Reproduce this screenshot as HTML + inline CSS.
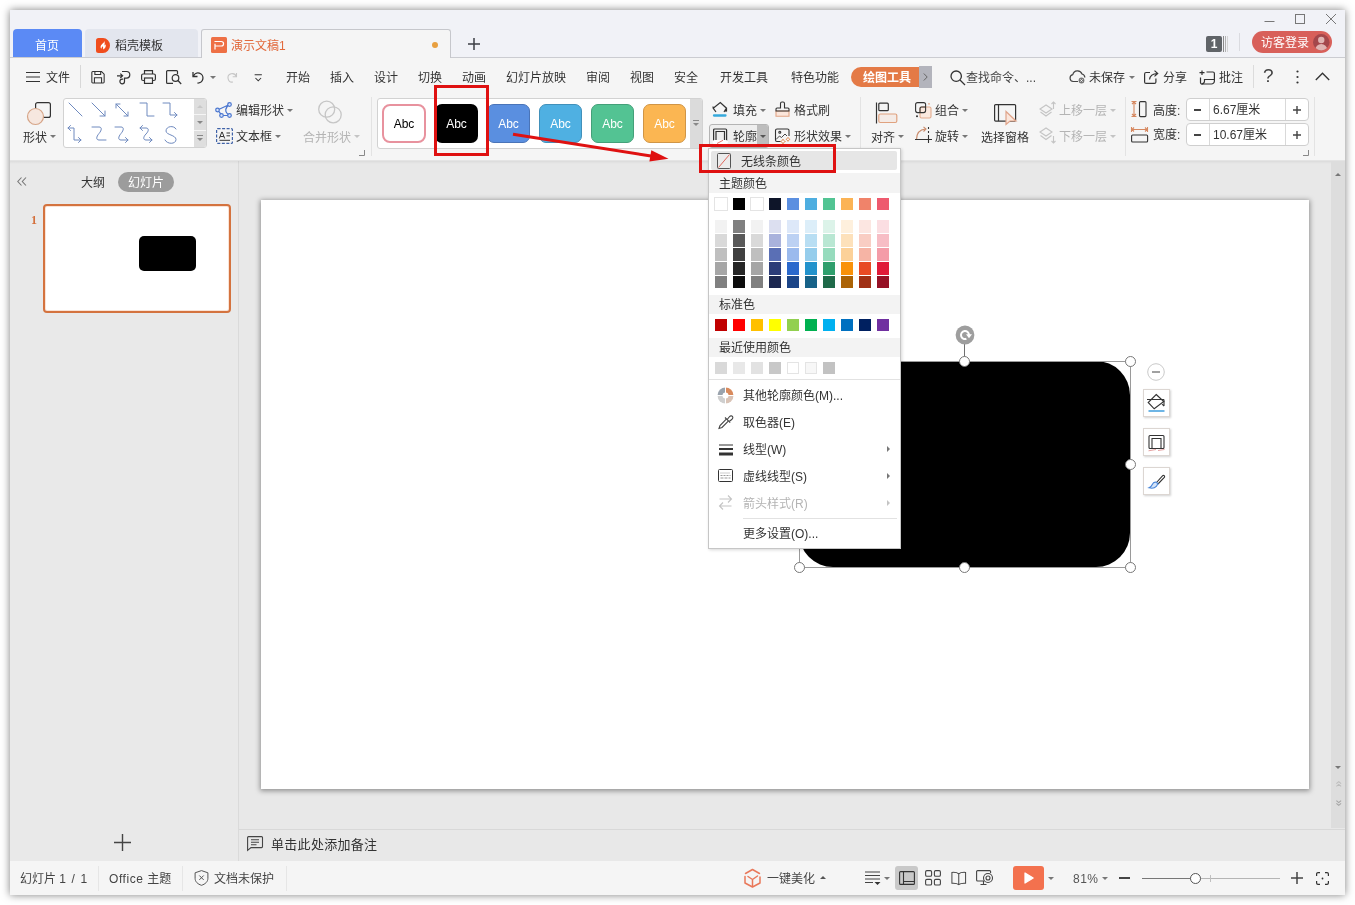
<!DOCTYPE html>
<html lang="zh-CN">
<head>
<meta charset="utf-8">
<title>演示文稿1 - WPS 演示</title>
<style>
*{box-sizing:border-box;margin:0;padding:0}
html,body{width:1355px;height:905px;overflow:hidden;background:#fff}
body{font-family:"Liberation Sans","Noto Sans CJK SC",sans-serif;font-size:12px;color:#333;position:relative}
.abs,.t,#win div,#win span,#win svg{position:absolute}
#win{position:absolute;left:10px;top:10px;width:1335px;height:885px;background:#f5f5f5;box-shadow:0 0 8px 0 rgba(0,0,0,.5)}
/* all children are positioned in page coordinates via #pg offset */
#pg{position:absolute;left:-10px;top:-10px;width:1355px;height:905px;will-change:transform}
.t{white-space:nowrap;line-height:16px;height:16px;font-size:12px;color:#333;margin-top:1px}
.g{color:#b4b4b4}
.sep{width:1px;background:#dcdcdc}
.dd{width:0;height:0;border-left:3px solid transparent;border-right:3px solid transparent;border-top:3px solid #777}
.ddg{border-top-color:#c4c4c4}
svg{overflow:visible}
.sw{width:12px;height:12px}
</style>
</head>
<body>
<div id="win"><div id="pg">

<!-- ===== TITLE / TAB BAR ===== -->
<div id="titlebar" style="left:10px;top:10px;width:1335px;height:47px;background:#f1f2f7"></div>
<div style="left:10px;top:57px;width:1335px;height:1px;background:#cbccd1"></div>
<!--TABS-->
<!-- home tab -->
<div style="left:13px;top:29px;width:69px;height:28px;background:#5b8af5;border-radius:4px 4px 0 0"></div>
<div class="t" style="left:35px;top:37px;color:#fff;font-size:12px">首页</div>
<!-- template tab -->
<div style="left:85px;top:29px;width:113px;height:28px;background:#e3e6ee;border-radius:4px 4px 0 0"></div>
<svg style="left:96px;top:38px" width="14" height="15" viewBox="0 0 14 15"><path d="M2.500 0H7a7 7.500 0 0 1 0 15H2.500A2.500 2.500 0 0 1 0 12.500v-10A2.500 2.500 0 0 1 2.500 0z" fill="#f04d1d"/><path d="M8.200 2.800c.300 1.700-1.300 2.500-2.500 3.700-1.300 1.300-1.500 3-.400 4.500.100-1.300.700-2 1.700-2.700-.100 1.200.300 2 .100 3.200 2.300-.900 3.300-3.200 2.400-5.200-.300.700-.600 1-1.100 1.300.400-1.600.500-3.200-.200-4.800z" fill="#fff"/></svg>
<div class="t" style="left:115px;top:37px;color:#333">稻壳模板</div>
<!-- active doc tab -->
<div style="left:201px;top:29px;width:250px;height:29px;background:#f5f5f5;border:1px solid #c6c7cc;border-bottom:none;border-radius:3px 3px 0 0"></div>
<svg style="left:211px;top:37px" width="16" height="16" viewBox="0 0 16 16"><rect width="16" height="16" rx="1.500" fill="#ee7045"/><path d="M3.500 4.500h6.800a2.250 2.250 0 0 1 0 4.500H4M4 6.700v5.800" fill="none" stroke="#fff" stroke-width="1.200"/></svg>
<div class="t" style="left:231px;top:37px;color:#e2693b">演示文稿1</div>
<div style="left:432px;top:42px;width:6px;height:6px;border-radius:3px;background:#e8a040"></div>
<!-- plus -->
<svg style="left:468px;top:38px" width="12" height="12" viewBox="0 0 12 12"><path d="M6 0v12M0 6h12" stroke="#3c3f45" stroke-width="1.500"/></svg>
<!-- window controls -->
<svg style="left:1264px;top:13px" width="74" height="14" viewBox="0 0 74 14"><path d="M0.500 8.500h10" stroke="#777" stroke-width="1"/><rect x="31.500" y="1.500" width="9" height="9" fill="none" stroke="#777" stroke-width="1"/><path d="M62 1l10 10M72 1l-10 10" stroke="#777" stroke-width="1"/></svg>
<!-- badge 1 -->
<div style="left:1206px;top:36px;width:16px;height:16px;background:#606468;border-radius:2px"></div>
<div class="t" style="left:1206px;top:35px;width:16px;text-align:center;color:#fff;font-weight:bold;font-size:12px;line-height:16px;height:16px">1</div>
<div style="left:1223px;top:36px;width:1px;height:16px;background:#8a8a8a"></div>
<div style="left:1225px;top:36px;width:1px;height:16px;background:#b0b0b0"></div>
<div style="left:1227px;top:36px;width:1px;height:16px;background:#d4d4d4"></div>
<div class="sep" style="left:1239px;top:33px;height:18px;background:#dadbe0"></div>
<!-- login -->
<div style="left:1252px;top:31px;width:80px;height:22px;border-radius:11px;background:#d8605a"></div>
<div class="t" style="left:1261px;top:34px;color:#fff">访客登录</div>
<svg style="left:1313px;top:34px" width="16.500" height="16.500" viewBox="0 0 18 18"><circle cx="9" cy="9" r="9" fill="#a4474b"/><clipPath id="avc"><circle cx="9" cy="9" r="9"/></clipPath><g clip-path="url(#avc)"><circle cx="9" cy="6.500" r="3.500" fill="#e0b4b2"/><ellipse cx="9" cy="17" rx="6.500" ry="6" fill="#e0b4b2"/></g></svg>
<!--/TABS-->

<!-- ===== MENU ROW ===== -->
<!--MENU-->
<!-- hamburger + file -->
<svg style="left:26px;top:71px" width="14" height="12" viewBox="0 0 14 12"><path d="M0 1.500h14M0 6h14M0 10.500h14" stroke="#333" stroke-width="1.100"/></svg>
<div class="t" style="left:46px;top:69px">文件</div>
<div class="sep" style="left:80px;top:65px;height:23px;background:#d8d8d8"></div>
<!-- save -->
<svg style="left:91px;top:71px" width="14" height="12.500" viewBox="0 0 15 14" fill="none" stroke="#333" stroke-width="1.200"><path d="M1.600 .600h9.800l3 3v8.800a1 1 0 0 1-1 1H1.600a1 1 0 0 1-1-1V1.600a1 1 0 0 1 1-1z"/><path d="M3.500 13.400V7.500h8v5.900M4 .600v3.400h6.500V.600"/></svg>
<!-- export/pdf -->
<svg style="left:116px;top:70px" width="15" height="15" viewBox="0 0 15 15" fill="none" stroke="#333" stroke-width="1.200"><path d="M6 1.500h4.500a3.300 3.300 0 0 1 0 6.600H8.500v3.400a2.300 2.300 0 1 1-2.300-2.300h1"/><path d="M1 5.800h5.500M4.300 3.600l2.300 2.200-2.300 2.200"/></svg>
<!-- print -->
<svg style="left:141px;top:70px" width="15" height="14" viewBox="0 0 15 14" fill="none" stroke="#333" stroke-width="1.200"><path d="M3.500 4V.600h8V4"/><rect x=".600" y="4" width="13.800" height="6.500" rx="1.500"/><rect x="3.500" y="8" width="8" height="5.400" fill="#f5f5f5"/></svg>
<!-- preview -->
<svg style="left:166px;top:70px" width="16" height="15" viewBox="0 0 16 15" fill="none" stroke="#333" stroke-width="1.200"><path d="M11.500 4V1.600a1 1 0 0 0-1-1H1.600a1 1 0 0 0-1 1v10.800a1 1 0 0 0 1 1H7"/><circle cx="9.500" cy="8" r="3.300"/><path d="M12 10.500l3.200 3.500"/></svg>
<!-- undo -->
<svg style="left:192px;top:71px" width="13" height="13" viewBox="0 0 13 13" fill="none" stroke="#333" stroke-width="1.300"><path d="M1 1v4.500h4.500"/><path d="M1.300 5.200A5 5 0 1 1 5.500 12"/></svg>
<div class="dd" style="left:210px;top:76px"></div>
<!-- redo (disabled) -->
<svg style="left:226px;top:72px" width="12" height="11" viewBox="0 0 11 11" fill="none" stroke="#c6c6c6" stroke-width="1.100"><path d="M10 1v3.800H6.200"/><path d="M9.700 4.500A4.200 4.200 0 1 0 6.500 10"/></svg>
<!-- more -->
<svg style="left:253.500px;top:73.500px" width="8.500" height="8" viewBox="0 0 10 10" fill="none" stroke="#333" stroke-width="1.300"><path d="M.500 1h9M1.500 5l3.500 3.500L8.500 5"/></svg>
<!-- menus -->
<div class="t" style="left:286px;top:69px">开始</div>
<div class="t" style="left:330px;top:69px">插入</div>
<div class="t" style="left:374px;top:69px">设计</div>
<div class="t" style="left:418px;top:69px">切换</div>
<div class="t" style="left:462px;top:69px">动画</div>
<div class="t" style="left:506px;top:69px">幻灯片放映</div>
<div class="t" style="left:586px;top:69px">审阅</div>
<div class="t" style="left:630px;top:69px">视图</div>
<div class="t" style="left:674px;top:69px">安全</div>
<div class="t" style="left:720px;top:69px">开发工具</div>
<div class="t" style="left:791px;top:69px">特色功能</div>
<div style="left:851px;top:67px;width:68px;height:20px;border-radius:10px 0 0 10px;background:#e47a46"></div>
<div class="t" style="left:863px;top:69px;color:#fff;font-weight:bold">绘图工具</div>
<div style="left:919px;top:66px;width:13px;height:22px;background:#b3b4bc"></div>
<svg style="left:923px;top:73px" width="5" height="8" viewBox="0 0 5 8" fill="none" stroke="#666" stroke-width="1"><path d="M.800 .500l3.400 3.500L.800 7.500"/></svg>
<!-- search -->
<svg style="left:950px;top:70px" width="16" height="16" viewBox="0 0 16 16" fill="none" stroke="#333" stroke-width="1.300"><circle cx="6.200" cy="6.200" r="5.200"/><path d="M10 10l5 5"/></svg>
<div class="t" style="left:966px;top:69px;color:#444">查找命令、...</div>
<!-- cloud unsaved -->
<svg style="left:1069px;top:70px" width="18" height="14" viewBox="0 0 18 14" fill="none" stroke="#444" stroke-width="1.200"><path d="M9 11.500H4.200A3.500 3.500 0 0 1 3.800 4.600 4.800 4.800 0 0 1 13 4a3.600 3.600 0 0 1 2.800 3.500"/><circle cx="12.500" cy="10.500" r="2.900" fill="#777" stroke="none"/><path d="M11.400 9.400l2.200 2.200M13.600 9.400l-2.200 2.200" stroke="#fff" stroke-width=".900"/></svg>
<div class="t" style="left:1089px;top:69px">未保存</div>
<div class="dd" style="left:1129px;top:76px"></div>
<!-- share -->
<svg style="left:1144px;top:70px" width="15" height="14" viewBox="0 0 15 14" fill="none" stroke="#333" stroke-width="1.200"><path d="M6 2.500H2.100a1.500 1.500 0 0 0-1.500 1.500v7.900a1.500 1.500 0 0 0 1.500 1.500h8.300a1.500 1.500 0 0 0 1.500-1.500V8.500"/><path d="M5.500 9.500C6 5.500 8.500 3.600 13.500 3.500M10.500 .600l3.200 2.900-3.200 2.900"/></svg>
<div class="t" style="left:1163px;top:69px">分享</div>
<!-- comment -->
<svg style="left:1199px;top:70px" width="16" height="15" viewBox="0 0 16 15" fill="none" stroke="#333" stroke-width="1.200"><path d="M3 .500V5M.500 2.700H5.500"/><path d="M7.500 2h6.400a1.500 1.500 0 0 1 1.500 1.500v7.500a3 3 0 0 1-3 3H3a1.500 1.500 0 0 1-1.500-1.500V7.500"/><path d="M15.400 9.500H5.500v1.200a3 3 0 0 1-3 3.300"/></svg>
<div class="t" style="left:1219px;top:69px">批注</div>
<div class="sep" style="left:1253px;top:65px;height:23px;background:#dcdcdc"></div>
<div class="t" style="left:1263px;top:64px;font-size:19px;line-height:22px;height:22px;color:#444">?</div>
<svg style="left:1296px;top:70px" width="3" height="14" viewBox="0 0 3 14" fill="#333"><circle cx="1.500" cy="1.500" r="1.100"/><circle cx="1.500" cy="7" r="1.100"/><circle cx="1.500" cy="12.500" r="1.100"/></svg>
<svg style="left:1315px;top:72px" width="15" height="9" viewBox="0 0 15 9" fill="none" stroke="#333" stroke-width="1.300"><path d="M.800 8L7.500 1.200 14.200 8"/></svg>
<!--/MENU-->

<!-- ===== RIBBON ===== -->
<!--RIBBON-->
<!-- shapes button -->
<svg style="left:27px;top:101px" width="25" height="25" viewBox="0 0 25 25" fill="none"><rect x="8.600" y="1.600" width="14.800" height="14.800" rx="2" stroke="#333" stroke-width="1.200" fill="#f5f5f5"/><circle cx="8.500" cy="15.500" r="8" fill="#f6e7df" stroke="#d6a588" stroke-width="1.200"/></svg>
<div class="t" style="left:23px;top:129px">形状</div>
<div class="dd" style="left:50px;top:135px"></div>
<!-- shapes gallery -->
<div style="left:63px;top:98px;width:144px;height:50px;background:#fff;border:1px solid #d2d2d2;border-radius:3px"></div>
<div style="left:194px;top:99px;width:12px;height:48px;background:#dedede;border-radius:0 2px 2px 0"></div>
<div style="left:194px;top:114px;width:12px;height:1px;background:#f5f5f5"></div>
<div style="left:194px;top:130px;width:12px;height:1px;background:#f5f5f5"></div>
<div class="dd ddg" style="left:197px;top:105px;border-top:none;border-bottom:3px solid #c8c8c8"></div>
<div class="dd" style="left:197px;top:121px;border-top-color:#888"></div>
<div style="left:197px;top:135px;width:6px;height:1px;background:#888"></div>
<div class="dd" style="left:197px;top:138px;border-top-color:#888"></div>
<svg style="left:63px;top:98px" width="131" height="50" viewBox="0 0 131 50" fill="none" stroke="#6f8abf" stroke-width="1" stroke-linecap="round" stroke-linejoin="round">
<path d="M6 5l13 13"/>
<path d="M29 5l13 13M42 13v5h-5"/>
<path d="M53 6l12 12M53 10V6h4M65 14v4h-4"/>
<path d="M77 5h7v13h7"/>
<path d="M100 5h7v12h7M111.500 14.500l2.500 2.500-2.500 2.500"/>
<path d="M5 30h6v12h7M7.500 27.500L5 30l2.500 2.500M15.500 39.500l2.500 2.500-2.500 2.500"/>
<path d="M29 29h7c3 0 3 3 0 6.500s-3 6.500 0 6.500h7"/>
<path d="M52 29h6c3 0 3 3 0 6.500s-3 6.500 0 6.500h7M62.500 39.500l2.500 2.500-2.500 2.500"/>
<path d="M77 30h6c3 0 3 3 0 6s-3 6 0 6h6M79.500 27.500l-2.500 2.500 2.500 2.500M86.500 39.500l2.500 2.500-2.500 2.500"/>
<path d="M113 31c-2-4-10-3-10 2 0 4 10 4 10 8.500 0 5-9 5-11 .500"/>
</svg>
<!-- edit shape -->
<svg style="left:215px;top:102px" width="18" height="16" viewBox="0 0 18 16" fill="none" stroke="#4a76cf" stroke-width="1.200"><path d="M2.500 8L14.500 2.500C10 5.500 9 10 14.500 13.500H7z"/><g fill="#dbe6fa"><circle cx="2.500" cy="8" r="1.800"/><circle cx="14.500" cy="2.500" r="1.800"/><circle cx="14.500" cy="13.500" r="1.800"/><circle cx="6.500" cy="13.500" r="1.800"/></g></svg>
<div class="t" style="left:236px;top:102px">编辑形状</div>
<div class="dd" style="left:287px;top:109px"></div>
<!-- text box -->
<svg style="left:216px;top:128px" width="17" height="16" viewBox="0 0 17 16" fill="none"><rect x=".600" y=".600" width="15.800" height="14.800" rx="1" stroke="#3f62a8" stroke-width="1.200" stroke-dasharray="3 1.500"/><path d="M3.300 10.500L5.800 4h.400l2.500 6.500M4.200 8.500h3.600M10.500 5h3.500M10.500 7.800h3.500M3.500 12.300h10.500" stroke="#333" stroke-width="1"/></svg>
<div class="t" style="left:236px;top:128px">文本框</div>
<div class="dd" style="left:275px;top:135px"></div>
<!-- merge shapes (disabled) -->
<svg style="left:317px;top:100px" width="26" height="26" viewBox="0 0 26 26" fill="none" stroke="#c6c6c6" stroke-width="1.300"><circle cx="9.700" cy="9.200" r="8"/><circle cx="16.200" cy="14.800" r="8"/></svg>
<div class="t g" style="left:303px;top:129px">合并形状</div>
<div class="dd ddg" style="left:354px;top:135px"></div>
<svg style="left:359px;top:150px" width="6" height="6" viewBox="0 0 6 6" fill="none" stroke="#888" stroke-width="1"><path d="M5.500 0v5.500H0"/></svg>
<div class="sep" style="left:371px;top:97px;height:59px;background:#e3e3e3"></div>
<!-- style gallery -->
<div style="left:377px;top:98px;width:326px;height:51px;background:#fff;border:1px solid #d2d2d2;border-radius:3px"></div>
<div style="left:690px;top:99px;width:12px;height:49px;background:#dbdbdb;border-radius:0 2px 2px 0"></div>
<div style="left:693px;top:120px;width:6px;height:1px;background:#888"></div>
<div class="dd" style="left:693px;top:123px;border-top-color:#888"></div>
<div style="left:382px;top:104px;width:44px;height:39px;background:#fff;border:2px solid #e8929e;border-radius:8px"></div>
<div style="left:435px;top:104px;width:43px;height:39px;background:#000;border-radius:7px"></div>
<div style="left:487px;top:104px;width:43px;height:39px;background:#5a8fe0;border:1px solid #4a74b8;border-radius:7px"></div>
<div style="left:539px;top:104px;width:43px;height:39px;background:#4fb0e2;border:1px solid #4190ba;border-radius:7px"></div>
<div style="left:591px;top:104px;width:43px;height:39px;background:#53c393;border:1px solid #44a079;border-radius:7px"></div>
<div style="left:643px;top:104px;width:43px;height:39px;background:#fbb652;border:1px solid #d09546;border-radius:7px"></div>
<div class="t" style="left:382px;top:115px;width:44px;text-align:center;color:#000;font-size:12px">Abc</div>
<div class="t" style="left:435px;top:115px;width:43px;text-align:center;color:#fff;font-size:12px">Abc</div>
<div class="t" style="left:487px;top:115px;width:43px;text-align:center;color:#fff;font-size:12px">Abc</div>
<div class="t" style="left:539px;top:115px;width:43px;text-align:center;color:#fff;font-size:12px">Abc</div>
<div class="t" style="left:591px;top:115px;width:43px;text-align:center;color:#fff;font-size:12px">Abc</div>
<div class="t" style="left:643px;top:115px;width:43px;text-align:center;color:#fff;font-size:12px">Abc</div>
<!-- fill -->
<svg style="left:712px;top:101px" width="16" height="17" viewBox="0 0 16 17" fill="none" stroke="#333" stroke-width="1.200"><path d="M4 11L1.200 7.200 1 5.500M1.200 7.200L8.300 1.500l6.200 5.700-2.500 3.800M14.500 7.200v3.300M12.500 9l2 1.500"/><path d="M2 14.500h11.500" stroke="#36a9dc" stroke-width="2.300" stroke-linecap="round"/></svg>
<div class="t" style="left:733px;top:102px">填充</div>
<div class="dd" style="left:760px;top:109px"></div>
<!-- format painter -->
<svg style="left:775px;top:101px" width="15" height="16" viewBox="0 0 15 16" fill="none" stroke="#333" stroke-width="1.100"><path d="M1 15.200V10h13v5.200z" fill="#fbe6db" stroke="#e2a585"/><path d="M1 10V8a1 1 0 0 1 1-1h3.500V2.500a1.500 1.500 0 0 1 1.500-1.500h1a1.500 1.500 0 0 1 1.500 1.500V7H13a1 1 0 0 1 1 1v2z"/></svg>
<div class="t" style="left:794px;top:102px">格式刷</div>
<!-- outline (pressed) -->
<div style="left:709px;top:124px;width:60px;height:24px;background:#efefef;border:1px solid #b4b4b4;border-radius:3px"></div>
<div style="left:757px;top:125px;width:11px;height:22px;background:#bdbdbd;border-radius:0 2px 2px 0"></div>
<svg style="left:712px;top:127px" width="16" height="17" viewBox="0 0 16 17" fill="none" stroke="#333" stroke-width="1.200"><path d="M1.600 14V3a1 1 0 0 1 1-1h11a1 1 0 0 1 1 1v11"/><path d="M4 13.500V4.500h8.500v9"/><rect x=".500" y="13" width="15.500" height="4" rx="2" fill="#fff" stroke="none"/><path d="M5 16.500L11 13.300" stroke="#e0776e" stroke-width="1"/></svg>
<div class="t" style="left:733px;top:128px">轮廓</div>
<div class="dd" style="left:760px;top:135px;border-top-color:#555"></div>
<!-- shape effects -->
<svg style="left:775px;top:127px" width="16" height="17" viewBox="0 0 16 17" fill="none" stroke="#333" stroke-width="1.100"><path d="M6 14.500H2a1.500 1.500 0 0 1-1.500-1.500V3.500A1.500 1.500 0 0 1 2 2h10.500A1.500 1.500 0 0 1 14 3.500V9"/><circle cx="4.800" cy="5.300" r="1"/><path d="M1 12.500l3.500-3.500 2 1.500 3.500-3.500 2 2" stroke-width=".900"/><path d="M8 12l.800 1.700 1.700.800-1.700.800L8 17l-.800-1.700-1.700-.800 1.700-.800zM13 10.200l.700 1.400 1.400.700-1.400.700-.700 1.400-.700-1.400-1.400-.700 1.400-.700z" stroke="#e0935f" stroke-width=".900" fill="#fff"/></svg>
<div class="t" style="left:794px;top:128px">形状效果</div>
<div class="dd" style="left:845px;top:135px"></div>
<div class="sep" style="left:860px;top:97px;height:59px;background:#e3e3e3"></div>
<!-- align -->
<svg style="left:875px;top:102px" width="23" height="24" viewBox="0 0 23 24" fill="none" stroke-width="1.200"><path d="M1.500 .500v21" stroke="#333"/><rect x="3.800" y="1.200" width="9.500" height="7.500" rx="1" stroke="#333"/><rect x="3.800" y="12" width="18" height="8.500" rx="1.500" stroke="#e0a27f" fill="#f4ebe6"/></svg>
<div class="t" style="left:871px;top:129px">对齐</div>
<div class="dd" style="left:898px;top:135px"></div>
<!-- group -->
<svg style="left:915px;top:102px" width="17" height="17" viewBox="0 0 17 17" fill="none" stroke-width="1.100"><rect x="5" y="5" width="11" height="11" rx="1.500" stroke="#e3ab8d" fill="#fbe9df"/><rect x=".600" y=".600" width="10" height="10" rx="2" stroke="#333" fill="none"/><path d="M5 10.600V6.500A1.500 1.500 0 0 1 6.500 5H10.600" stroke="#333"/><circle cx="2" cy="14.300" r="1" fill="#333"/><circle cx="14" cy="1.800" r=".900" fill="#e3ab8d"/></svg>
<div class="t" style="left:935px;top:102px">组合</div>
<div class="dd" style="left:962px;top:109px"></div>
<!-- rotate -->
<svg style="left:915px;top:126px" width="18" height="18" viewBox="0 0 18 18" fill="none" stroke-width="1.100"><path d="M1.500 13.500C1.500 7 5 3.500 10.500 3" stroke="#c98a6a"/><path d="M8.500 .800L11 3 8.500 5.500" stroke="#c98a6a"/><path d="M13.500 1v2.500M13.500 5v2.500M13.500 9v2" stroke="#333" stroke-dasharray="2 1.500"/><path d="M0 13.500h17M13.500 11v6" stroke="#333"/></svg>
<div class="t" style="left:935px;top:128px">旋转</div>
<div class="dd" style="left:962px;top:135px"></div>
<!-- selection pane -->
<svg style="left:994px;top:102px" width="26" height="25" viewBox="0 0 26 25" fill="none" stroke-width="1.200"><rect x=".600" y="2.600" width="21" height="16.500" rx="1" stroke="#333"/><path d="M4.500 2.600v16.500" stroke="#333"/><path d="M12 9.500v13l4-3.500h6z" stroke="#e0a48a" fill="#fbe6db"/></svg>
<div class="t" style="left:981px;top:129px">选择窗格</div>
<!-- bring forward / send back -->
<svg style="left:1039px;top:101px" width="18" height="17" viewBox="0 0 18 17" fill="none" stroke="#c4c4c4" stroke-width="1.100"><path d="M7 4L1 8l6 4 6-4zM1.500 11L7 15l5.500-4"/><path d="M14.500 8V1M12.500 3l2-2 2 2"/></svg>
<div class="t g" style="left:1059px;top:102px">上移一层</div>
<div class="dd ddg" style="left:1110px;top:109px"></div>
<svg style="left:1039px;top:127px" width="18" height="17" viewBox="0 0 18 17" fill="none" stroke="#c4c4c4" stroke-width="1.100"><path d="M7 1L1 5l6 4 6-4zM1.500 8.500L7 12.500l5.500-4"/><path d="M14.500 9v7M12.500 14l2 2 2-2"/></svg>
<div class="t g" style="left:1059px;top:128px">下移一层</div>
<div class="dd ddg" style="left:1110px;top:135px"></div>
<div class="sep" style="left:1125px;top:97px;height:59px;background:#e3e3e3"></div>
<!-- height -->
<svg style="left:1131px;top:101px" width="16" height="17" viewBox="0 0 16 17" fill="none" stroke-width="1.100"><path d="M3 .500v15M.500 .500h5M.500 15.500h5M1 3l2-2 2 2M1 13l2 2 2-2" stroke="#d68860"/><rect x="8.500" y=".600" width="6.500" height="15" rx="1" stroke="#333"/></svg>
<div class="t" style="left:1153px;top:102px">高度:</div>
<div style="left:1186px;top:98px;width:123px;height:23px;background:#fff;border:1px solid #cfcfcf;border-radius:4px"></div>
<div class="sep" style="left:1209px;top:99px;height:21px;background:#d9d9d9"></div>
<div class="sep" style="left:1285px;top:99px;height:21px;background:#d9d9d9"></div>
<div style="left:1194px;top:109px;width:7px;height:1.500px;background:#444"></div>
<div class="t" style="left:1213px;top:101px">6.67厘米</div>
<svg style="left:1293px;top:106px" width="8" height="8" viewBox="0 0 8 8"><path d="M4 0v8M0 4h8" stroke="#444" stroke-width="1.400"/></svg>
<!-- width -->
<svg style="left:1131px;top:126px" width="17" height="17" viewBox="0 0 17 17" fill="none" stroke-width="1.100"><path d="M.500 3.500h16M.500 1v5M16.500 1v5M3 1.500l-2 2 2 2M14 1.500l2 2-2 2" stroke="#d68860"/><rect x=".600" y="9" width="16" height="7" rx="1" stroke="#333"/></svg>
<div class="t" style="left:1153px;top:126px">宽度:</div>
<div style="left:1186px;top:123px;width:123px;height:23px;background:#fff;border:1px solid #cfcfcf;border-radius:4px"></div>
<div class="sep" style="left:1209px;top:124px;height:21px;background:#d9d9d9"></div>
<div class="sep" style="left:1285px;top:124px;height:21px;background:#d9d9d9"></div>
<div style="left:1194px;top:134px;width:7px;height:1.500px;background:#444"></div>
<div class="t" style="left:1213px;top:126px">10.67厘米</div>
<svg style="left:1293px;top:131px" width="8" height="8" viewBox="0 0 8 8"><path d="M4 0v8M0 4h8" stroke="#444" stroke-width="1.400"/></svg>
<svg style="left:1303px;top:150px" width="6" height="6" viewBox="0 0 6 6" fill="none" stroke="#888" stroke-width="1"><path d="M5.500 0v5.500H0"/></svg>
<div class="sep" style="left:1314px;top:97px;height:59px;background:#e3e3e3"></div>
<!--/RIBBON-->


<!-- ===== WORKSPACE ===== -->
<div id="work" style="left:10px;top:161px;width:1335px;height:701px;background:#e8e8e8"></div>
<!--LEFTPANEL-->
<div style="left:10px;top:161px;width:228px;height:701px;background:#e9e9e9"></div>
<div style="left:238px;top:161px;width:1px;height:701px;background:#dadada"></div>
<svg style="left:17px;top:177px" width="10" height="9" viewBox="0 0 10 9" fill="none" stroke="#777" stroke-width="1.100"><path d="M4.500 .500L.800 4.500l3.700 4M9 .500L5.300 4.500l3.700 4"/></svg>
<div class="t" style="left:81px;top:174px">大纲</div>
<div style="left:118px;top:172px;width:56px;height:20px;border-radius:10px;background:#9c9c9c"></div>
<div class="t" style="left:128px;top:174px;color:#fff">幻灯片</div>
<div class="t" style="left:31px;top:211px;font-family:'Liberation Serif',serif;font-weight:bold;color:#d4703c;font-size:12px">1</div>
<div style="left:43px;top:204px;width:188px;height:109px;background:#fff;border:2px solid #d4733f;border-radius:4px;box-shadow:inset 0 0 0 1px #fae3d6"></div>
<div style="left:139px;top:236px;width:57px;height:35px;background:#000;border-radius:5px"></div>
<svg style="left:114px;top:834px" width="17" height="17" viewBox="0 0 17 17"><path d="M8.500 0v17M0 8.500h17" stroke="#444" stroke-width="1.400"/></svg>
<div style="left:10px;top:160px;width:1335px;height:4px;background:linear-gradient(rgba(0,0,0,.075),rgba(0,0,0,0))"></div>
<!--/LEFTPANEL-->
<!--SLIDE-->
<div style="left:261px;top:200px;width:1048px;height:589px;background:#fff;box-shadow:0 1px 5px 1px rgba(0,0,0,.38)"></div>
<!-- black rounded shape -->
<div style="left:799px;top:361px;width:331px;height:206px;background:#000;border-radius:34px"></div>
<div style="left:799px;top:361px;width:332px;height:207px;border:1px solid #9a9a9a"></div>
<!-- rotate handle -->
<div style="left:964px;top:344px;width:1px;height:13px;background:#707070"></div>
<svg style="left:954.500px;top:325px" width="20" height="20" viewBox="0 0 20 20"><circle cx="10" cy="10" r="9.400" fill="#9e9e9e"/><path d="M11.400 13.800A4 4 0 1 1 14 10" fill="none" stroke="#fff" stroke-width="2"/><path d="M11 9.300h6L14 13.200z" fill="#fff"/></svg>
<!-- handles -->
<svg style="left:0;top:0" width="1355" height="905" viewBox="0 0 1355 905" fill="#fff" stroke="#777" stroke-width="1"><circle cx="964.500" cy="361.500" r="5"/><circle cx="1130.500" cy="361.500" r="5"/><circle cx="1130.500" cy="464.500" r="5"/><circle cx="799.500" cy="567.500" r="5"/><circle cx="964.500" cy="567.500" r="5"/><circle cx="1130.500" cy="567.500" r="5"/><circle cx="799.500" cy="464.500" r="5"/></svg>
<!-- floating toolbar -->
<svg style="left:1147px;top:363px" width="18" height="18" viewBox="0 0 18 18"><circle cx="9" cy="9" r="8.300" fill="#fff" stroke="#c9c9c9" stroke-width="1"/><path d="M5 9h8" stroke="#8a8a8a" stroke-width="1.600"/></svg>
<div style="left:1143px;top:389px;width:27px;height:28px;background:#fff;border:1px solid #dcd6d2;box-shadow:1px 1px 2px rgba(0,0,0,.18)"></div>
<div style="left:1143px;top:428px;width:27px;height:28px;background:#fff;border:1px solid #dcd6d2;box-shadow:1px 1px 2px rgba(0,0,0,.18)"></div>
<div style="left:1143px;top:467px;width:27px;height:28px;background:#fff;border:1px solid #dcd6d2;box-shadow:1px 1px 2px rgba(0,0,0,.18)"></div>
<svg style="left:1147px;top:393px" width="19" height="19" viewBox="0 0 19 19" fill="none" stroke="#333" stroke-width="1.100"><path d="M9.200 1.500L16.800 8.500 7.200 15.800 1.200 9.500z"/><path d="M0 6.500h17M17 6.500v6.500M15 11l2 2.200"/><path d="M1.500 18h16" stroke="#4aa3df" stroke-width="1.600"/></svg>
<svg style="left:1147px;top:433px" width="19" height="19" viewBox="0 0 19 19" fill="none" stroke="#333" stroke-width="1.100"><rect x="2" y="2.500" width="15" height="13" rx="1"/><path d="M5 15.500V5.500h9v10"/><path d="M1 17.500h17" stroke="#fff" stroke-width="2.500"/><path d="M1.500 17.800L9 16.500M11 17.500L17.500 16.500" stroke="#d88" stroke-width=".800"/></svg>
<svg style="left:1147px;top:472px" width="19" height="19" viewBox="0 0 19 19" fill="none" stroke-width="1.100"><path d="M9.500 10.500L15.500 3.800a1.200 1.200 0 0 1 1.800 1.600L11 12" stroke="#333"/><path d="M9.300 10.300c-2-.500-3.300.500-4 2.200-.600 1.500-1.800 2.700-3.300 3.300 2.800.700 5.800.200 7.300-1.500.900-1 .900-1.800 1.700-2.500z" stroke="#4a86d8" fill="#d5e4f8"/></svg>
<!-- vertical scrollbar -->
<div style="left:1331px;top:161px;width:14px;height:667px;background:#dddddd"></div>
<div class="dd" style="left:1335px;top:173px;border-width:0 3px 3px 3px;border-style:solid;border-color:transparent transparent #777 transparent"></div>
<div class="dd" style="left:1335px;top:766px;border-width:3px 3px 0 3px;border-style:solid;border-color:#777 transparent transparent transparent"></div>
<svg style="left:1335.500px;top:781px" width="5.500" height="6" viewBox="0 0 7 7" fill="none" stroke="#bdbdbd" stroke-width="1.400"><path d="M.500 3l3-2.500 3 2.500M.500 6.500l3-2.500 3 2.500"/></svg>
<svg style="left:1335.500px;top:800px" width="5.500" height="6" viewBox="0 0 7 7" fill="none" stroke="#a4a4a4" stroke-width="1.400"><path d="M.500 .500l3 2.500 3-2.500M.500 4l3 2.500 3-2.500"/></svg>
<!--/SLIDE-->
<!--NOTES-->
<div style="left:239px;top:829px;width:1106px;height:1px;background:#d8d8d8"></div>
<svg style="left:247px;top:836px" width="16" height="15" viewBox="0 0 16 15" fill="none" stroke="#444" stroke-width="1.100"><path d="M1.500 .600h13a1 1 0 0 1 1 1v9a1 1 0 0 1-1 1H4l-3.400 2.800V1.600a1 1 0 0 1 .900-1z"/><path d="M4 3.700h8M4 6.200h8M4 8.700h5.500"/></svg>
<div class="t" style="left:271px;top:836px;font-size:13px;letter-spacing:.300px">单击此处添加备注</div>
<!--/NOTES-->

<!-- ===== STATUS BAR ===== -->
<div id="status" style="left:10px;top:861px;width:1335px;height:34px;background:#f5f5f5"></div>
<!--STATUS-->
<div class="t" style="left:20px;top:870px;color:#444">幻灯片 <span style="position:static;letter-spacing:1.100px">1 / 1</span></div>
<div class="sep" style="left:98px;top:866px;height:25px;background:#e6e6e6"></div>
<div class="t" style="left:109px;top:870px;color:#444"><span style="position:static;letter-spacing:.550px">Office </span>主题</div>
<div class="sep" style="left:182px;top:866px;height:25px;background:#e6e6e6"></div>
<svg style="left:194px;top:870px" width="15" height="16" viewBox="0 0 15 16" fill="none" stroke="#555" stroke-width="1"><path d="M7.500 .600l6.400 2.200v5.500c0 3.400-2.600 5.800-6.400 7-3.800-1.200-6.400-3.600-6.400-7V2.800z"/><path d="M5.300 5.500l4.400 4.400M9.700 5.500L5.300 9.900"/></svg>
<div class="t" style="left:214px;top:870px;color:#444">文档未保护</div>
<div class="sep" style="left:286px;top:866px;height:25px;background:#e6e6e6"></div>
<!-- beautify -->
<svg style="left:743px;top:868px" width="19" height="20" viewBox="0 0 19 20" fill="none" stroke="#e9785a" stroke-width="1.500" stroke-linejoin="round" stroke-linecap="round"><path d="M2.500 5.500L9.500 1.500l7 4"/><path d="M2 8.500v6.500l7.500 4 7.500-4V9"/><path d="M5 8.500l4.500 3 5-3.500M9.500 11.500V18.500"/></svg>
<div class="t" style="left:767px;top:870px;color:#444">一键美化</div>
<div class="dd" style="left:820px;top:876px;border-top:none;border-bottom:3px solid #555"></div>
<!-- notes toggle -->
<svg style="left:865px;top:871px" width="16" height="15" viewBox="0 0 16 15" fill="none" stroke="#444" stroke-width="1.200"><path d="M0 1h15M0 4.500h15M0 8h15M0 11.500h8"/><path d="M9.500 11l3 3 3-3z" fill="#333" stroke="none"/></svg>
<div class="dd" style="left:884px;top:877px"></div>
<!-- normal view (selected) -->
<div style="left:895px;top:866px;width:23px;height:24px;background:#c9c9c9;border-radius:3px"></div>
<svg style="left:899px;top:871px" width="16" height="14" viewBox="0 0 16 14" fill="none" stroke="#333" stroke-width="1.100"><rect x=".600" y=".600" width="14.800" height="12.800" rx="1"/><path d="M4.500 .600v12.800M4.500 10.500h10.900"/></svg>
<!-- sorter -->
<svg style="left:925px;top:870px" width="16" height="16" viewBox="0 0 16 16" fill="none" stroke="#444" stroke-width="1.100"><rect x=".600" y=".600" width="6" height="5.600" rx="1.300"/><rect x="9.400" y=".600" width="6" height="5.600" rx="1.300"/><rect x=".600" y="9.400" width="6" height="5.600" rx="1.300"/><rect x="9.400" y="9.400" width="6" height="5.600" rx="1.300"/></svg>
<!-- reading -->
<svg style="left:951px;top:871px" width="15.500" height="15" viewBox="0 0 17 15" fill="none" stroke="#444" stroke-width="1.100"><path d="M8.500 2.500C7 1 4 .600 1 .800v12c3-.200 6 .200 7.500 1.500 1.500-1.300 4.500-1.700 7.500-1.500V.800c-3-.200-6 .200-7.500 1.700zM8.500 2.500v11.800"/></svg>
<!-- presenter -->
<svg style="left:976px;top:870px" width="18" height="16" viewBox="0 0 18 16" fill="none" stroke="#444" stroke-width="1.100"><path d="M8 11H1.600a1 1 0 0 1-1-1V1.600a1 1 0 0 1 1-1h12a1 1 0 0 1 1 1V3"/><path d="M4.500 14.500h6M7.500 11v3.500"/><circle cx="12" cy="8" r="4.500"/><circle cx="12" cy="8" r="2"/></svg>
<!-- play -->
<div style="left:1013px;top:866px;width:31px;height:24px;background:#f3714e;border-radius:3px"></div>
<svg style="left:1024px;top:872px" width="10" height="12" viewBox="0 0 12 14"><path d="M1.200 1v12L11 7z" fill="#fff" stroke="#fff" stroke-width="1.500" stroke-linejoin="round"/></svg>
<div class="dd" style="left:1048px;top:877px"></div>
<div class="t" style="left:1073px;top:870px;color:#555;letter-spacing:.500px">81%</div>
<div class="dd" style="left:1102px;top:877px"></div>
<div style="left:1119px;top:877px;width:11px;height:2px;background:#444"></div>
<div style="left:1142px;top:878px;width:138px;height:1px;background:#b5b5b5"></div>
<div style="left:1142px;top:878px;width:50px;height:1px;background:#777"></div>
<div style="left:1210px;top:875px;width:1px;height:7px;background:#c0c0c0"></div>
<div style="left:1190px;top:873px;width:11px;height:11px;border-radius:6px;background:#fff;border:1px solid #555"></div>
<svg style="left:1291px;top:872px" width="12" height="12" viewBox="0 0 12 12"><path d="M6 0v12M0 6h12" stroke="#444" stroke-width="1.500"/></svg>
<svg style="left:1316px;top:872px" width="13" height="13" viewBox="0 0 13 13" fill="none" stroke="#333" stroke-width="1.200"><path d="M.600 4V2a1.400 1.400 0 0 1 1.400-1.400h2M9 .600h2a1.400 1.400 0 0 1 1.400 1.400v2M12.400 9v2a1.400 1.400 0 0 1-1.400 1.400H9M4 12.400H2a1.400 1.400 0 0 1-1.400-1.400V9"/><circle cx="6.500" cy="6.500" r=".900" fill="#333" stroke="none"/></svg>
<!--/STATUS-->

<!-- ===== DROPDOWN ===== -->
<!--DROPDOWN-->
<div style="left:708px;top:148px;width:193px;height:401px;background:#fff;border:1px solid #c6c6c6;box-shadow:1px 1px 3px rgba(0,0,0,.16)"></div>
<div style="left:711px;top:151px;width:186px;height:19px;background:#e6e6e6;border-radius:2px"></div>
<svg style="left:717px;top:153px" width="14" height="16" viewBox="0 0 14 16"><rect x=".500" y=".500" width="13" height="15" rx="1" fill="#ececec" stroke="#555" stroke-width="1"/><path d="M1.500 14.500L12.500 1.500" stroke="#e0675c" stroke-width="1"/></svg>
<div class="t" style="left:741px;top:153px">无线条颜色</div>
<div style="left:709px;top:173px;width:191px;height:20px;background:#f3f3f3"></div>
<div class="t" style="left:719px;top:175px">主题颜色</div>
<div class="sw" style="left:714px;top:197px;width:14px;height:14px;background:#ffffff;border:1px solid #e4e4e4"></div>
<div class="sw" style="left:733px;top:198px;background:#000000"></div>
<div class="sw" style="left:750px;top:197px;width:14px;height:14px;background:#ffffff;border:1px solid #e4e4e4"></div>
<div class="sw" style="left:769px;top:198px;background:#0e1529"></div>
<div class="sw" style="left:787px;top:198px;background:#5b8fe0"></div>
<div class="sw" style="left:805px;top:198px;background:#4eaee0"></div>
<div class="sw" style="left:823px;top:198px;background:#52c493"></div>
<div class="sw" style="left:841px;top:198px;background:#fbb355"></div>
<div class="sw" style="left:859px;top:198px;background:#f0836a"></div>
<div class="sw" style="left:877px;top:198px;background:#ee5a6e"></div>
<div class="sw" style="left:715px;top:220px;height:13px;background:#f2f2f2"></div>
<div class="sw" style="left:715px;top:234px;height:13px;background:#d9d9d9"></div>
<div class="sw" style="left:715px;top:248px;height:13px;background:#bfbfbf"></div>
<div class="sw" style="left:715px;top:262px;height:13px;background:#a6a6a6"></div>
<div class="sw" style="left:715px;top:276px;height:12px;background:#808080"></div>
<div class="sw" style="left:733px;top:220px;height:13px;background:#808080"></div>
<div class="sw" style="left:733px;top:234px;height:13px;background:#595959"></div>
<div class="sw" style="left:733px;top:248px;height:13px;background:#404040"></div>
<div class="sw" style="left:733px;top:262px;height:13px;background:#262626"></div>
<div class="sw" style="left:733px;top:276px;height:12px;background:#0d0d0d"></div>
<div class="sw" style="left:751px;top:220px;height:13px;background:#f2f2f2"></div>
<div class="sw" style="left:751px;top:234px;height:13px;background:#d9d9d9"></div>
<div class="sw" style="left:751px;top:248px;height:13px;background:#bfbfbf"></div>
<div class="sw" style="left:751px;top:262px;height:13px;background:#a6a6a6"></div>
<div class="sw" style="left:751px;top:276px;height:12px;background:#808080"></div>
<div class="sw" style="left:769px;top:220px;height:13px;background:#dcdff0"></div>
<div class="sw" style="left:769px;top:234px;height:13px;background:#a9b2dc"></div>
<div class="sw" style="left:769px;top:248px;height:13px;background:#5a6fb5"></div>
<div class="sw" style="left:769px;top:262px;height:13px;background:#2c3c78"></div>
<div class="sw" style="left:769px;top:276px;height:12px;background:#1c2750"></div>
<div class="sw" style="left:787px;top:220px;height:13px;background:#dde8f9"></div>
<div class="sw" style="left:787px;top:234px;height:13px;background:#bcd1f3"></div>
<div class="sw" style="left:787px;top:248px;height:13px;background:#9bbaed"></div>
<div class="sw" style="left:787px;top:262px;height:13px;background:#2a68cc"></div>
<div class="sw" style="left:787px;top:276px;height:12px;background:#1c4588"></div>
<div class="sw" style="left:805px;top:220px;height:13px;background:#dceef9"></div>
<div class="sw" style="left:805px;top:234px;height:13px;background:#b8def3"></div>
<div class="sw" style="left:805px;top:248px;height:13px;background:#95cdec"></div>
<div class="sw" style="left:805px;top:262px;height:13px;background:#2292cc"></div>
<div class="sw" style="left:805px;top:276px;height:12px;background:#176288"></div>
<div class="sw" style="left:823px;top:220px;height:13px;background:#dcf3e9"></div>
<div class="sw" style="left:823px;top:234px;height:13px;background:#b9e7d3"></div>
<div class="sw" style="left:823px;top:248px;height:13px;background:#96dbbd"></div>
<div class="sw" style="left:823px;top:262px;height:13px;background:#2f9f6d"></div>
<div class="sw" style="left:823px;top:276px;height:12px;background:#1f6a49"></div>
<div class="sw" style="left:841px;top:220px;height:13px;background:#fef0dd"></div>
<div class="sw" style="left:841px;top:234px;height:13px;background:#fde1bb"></div>
<div class="sw" style="left:841px;top:248px;height:13px;background:#fcd199"></div>
<div class="sw" style="left:841px;top:262px;height:13px;background:#f9920a"></div>
<div class="sw" style="left:841px;top:276px;height:12px;background:#ab6306"></div>
<div class="sw" style="left:859px;top:220px;height:13px;background:#fce6e1"></div>
<div class="sw" style="left:859px;top:234px;height:13px;background:#f9cdc3"></div>
<div class="sw" style="left:859px;top:248px;height:13px;background:#f6b4a5"></div>
<div class="sw" style="left:859px;top:262px;height:13px;background:#e84a24"></div>
<div class="sw" style="left:859px;top:276px;height:12px;background:#a03015"></div>
<div class="sw" style="left:877px;top:220px;height:13px;background:#fbdee2"></div>
<div class="sw" style="left:877px;top:234px;height:13px;background:#f7bdc5"></div>
<div class="sw" style="left:877px;top:248px;height:13px;background:#f49ca8"></div>
<div class="sw" style="left:877px;top:262px;height:13px;background:#e01a38"></div>
<div class="sw" style="left:877px;top:276px;height:12px;background:#961125"></div>
<div style="left:709px;top:295px;width:191px;height:19px;background:#f3f3f3"></div>
<div class="t" style="left:719px;top:296px">标准色</div>
<div class="sw" style="left:715px;top:319px;background:#c00000"></div>
<div class="sw" style="left:733px;top:319px;background:#ff0000"></div>
<div class="sw" style="left:751px;top:319px;background:#ffc000"></div>
<div class="sw" style="left:769px;top:319px;background:#ffff00"></div>
<div class="sw" style="left:787px;top:319px;background:#92d050"></div>
<div class="sw" style="left:805px;top:319px;background:#00b050"></div>
<div class="sw" style="left:823px;top:319px;background:#00b0f0"></div>
<div class="sw" style="left:841px;top:319px;background:#0070c0"></div>
<div class="sw" style="left:859px;top:319px;background:#002060"></div>
<div class="sw" style="left:877px;top:319px;background:#7030a0"></div>
<div style="left:709px;top:338px;width:191px;height:19px;background:#f3f3f3"></div>
<div class="t" style="left:719px;top:339px">最近使用颜色</div>
<div class="sw" style="left:715px;top:362px;background:#d9d9d9"></div>
<div class="sw" style="left:733px;top:362px;background:#e8e8e8"></div>
<div class="sw" style="left:751px;top:362px;background:#e2e2e2"></div>
<div class="sw" style="left:769px;top:362px;background:#c8c8c8"></div>
<div class="sw" style="left:787px;top:362px;background:#ffffff;border:1px solid #e4e4e4"></div>
<div class="sw" style="left:805px;top:362px;background:#f7f7f7;border:1px solid #e4e4e4"></div>
<div class="sw" style="left:823px;top:362px;background:#c2c2c2"></div>
<div style="left:709px;top:379px;width:191px;height:1px;background:#e2e2e2"></div>
<svg style="left:717px;top:387px" width="17" height="17" viewBox="0 0 17 17"><path d="M8.500 8.500V.500A8 8 0 0 0 .500 8.500z" fill="#9aa3ad"/><path d="M8.500 8.500h8A8 8 0 0 0 8.500 .500z" fill="#d98a5c"/><path d="M8.500 8.500v8a8 8 0 0 0 8-8z" fill="#d9c3b6"/><path d="M8.500 8.500h-8a8 8 0 0 0 8 8z" fill="#cfcfcf"/><circle cx="8.500" cy="8.500" r="3" fill="#fff"/><path d="M8.500 0v17M0 8.500h17" stroke="#fff" stroke-width="1"/></svg>
<div class="t" style="left:743px;top:387px">其他轮廓颜色(M)...</div>
<svg style="left:718px;top:414px" width="16" height="16" viewBox="0 0 16 16" fill="none" stroke="#444" stroke-width="1.100"><path d="M8.300 5.200L2 11.500 1 14.500l3-1 6.300-6.300"/><path d="M7 3.500l5.200 5.200M9.200 5.500l2-2.500c1-1.200 2.400-1.500 3.200-.700s.500 2.200-.700 3.200L11.200 7.500"/></svg>
<div class="t" style="left:743px;top:414px">取色器(E)</div>
<svg style="left:719px;top:444px" width="14" height="12" viewBox="0 0 14 12"><path d="M0 1h14" stroke="#333" stroke-width="1"/><path d="M0 5h14" stroke="#333" stroke-width="2"/><path d="M0 10h14" stroke="#333" stroke-width="3"/></svg>
<div class="t" style="left:743px;top:441px">线型(W)</div>
<svg style="left:718px;top:469px" width="15" height="13" viewBox="0 0 15 13" fill="none" stroke="#333" stroke-width="1"><rect x=".500" y=".500" width="14" height="12" rx="1"/><g stroke="#999"><path d="M2.500 4h10" stroke-dasharray="1 1"/><path d="M2.500 6.500h10" stroke-dasharray="2 1"/><path d="M2.500 9h10" stroke-dasharray="3 1"/></g></svg>
<div class="t" style="left:743px;top:468px">虚线线型(S)</div>
<svg style="left:719px;top:495px" width="13" height="15" viewBox="0 0 13 15" fill="none" stroke="#c4c4c4" stroke-width="1.100"><path d="M.500 4h12M9 .500L12.500 4 9 7.500M12.500 11H.500M4 7.500L.500 11 4 14.500"/></svg>
<div class="t g" style="left:743px;top:495px">箭头样式(R)</div>
<div style="left:887px;top:446px;width:0;height:0;border-top:3px solid transparent;border-bottom:3px solid transparent;border-left:3px solid #777"></div>
<div style="left:887px;top:473px;width:0;height:0;border-top:3px solid transparent;border-bottom:3px solid transparent;border-left:3px solid #777"></div>
<div style="left:887px;top:500px;width:0;height:0;border-top:3px solid transparent;border-bottom:3px solid transparent;border-left:3px solid #c4c4c4"></div>
<div style="left:743px;top:518px;width:154px;height:1px;background:#e2e2e2"></div>
<div class="t" style="left:743px;top:525px">更多设置(O)...</div>
<!--/DROPDOWN-->

<!-- ===== RED ANNOTATIONS ===== -->
<!--ANNOT-->
<div style="left:434px;top:85px;width:55px;height:71px;border:3px solid #df1111"></div>
<div style="left:699px;top:144px;width:137px;height:29px;border:3px solid #df1111"></div>
<svg style="left:0;top:0" width="1355" height="905" viewBox="0 0 1355 905"><path d="M513 134.300L651 156" stroke="#df1111" stroke-width="3" fill="none"/><path d="M668.500 158.700L649.400 161.500 651.300 150.200z" fill="#df1111"/></svg>
<!--/ANNOT-->

</div></div>
</body>
</html>
